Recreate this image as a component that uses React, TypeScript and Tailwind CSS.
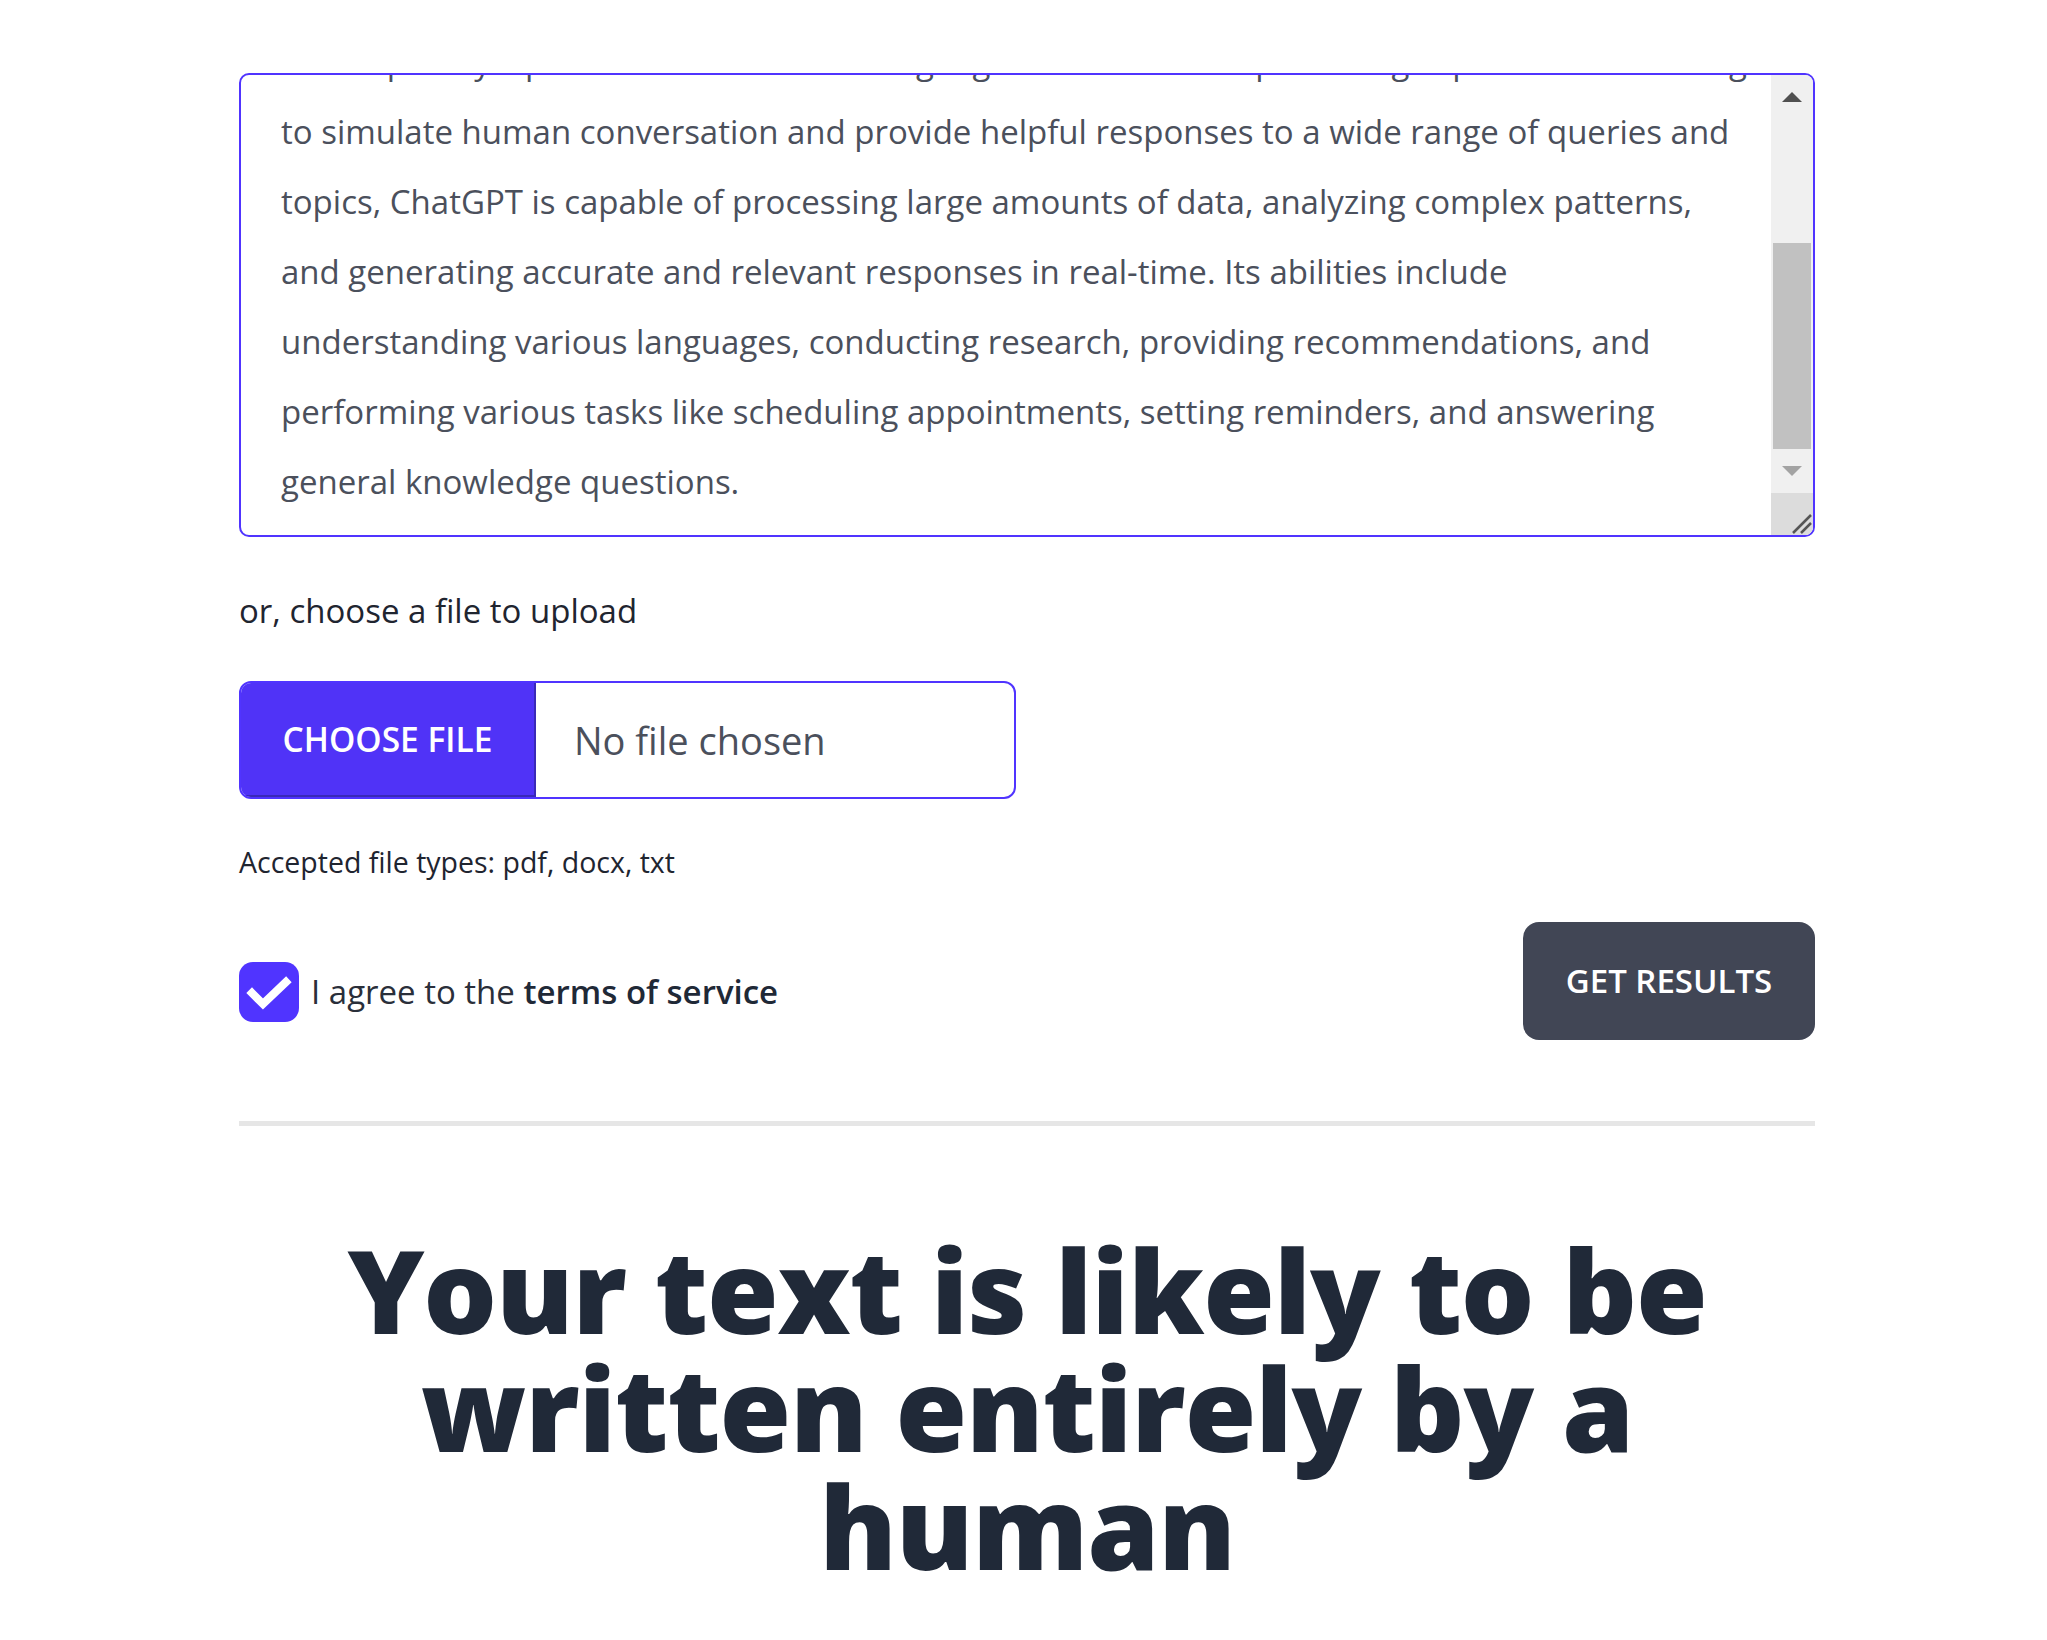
import React from "react";

const lines = [
  "Developed by OpenAI as an advanced language model with deep learning capabilities and designed",
  "to simulate human conversation and provide helpful responses to a wide range of queries and",
  "topics, ChatGPT is capable of processing large amounts of data, analyzing complex patterns,",
  "and generating accurate and relevant responses in real-time. Its abilities include",
  "understanding various languages, conducting research, providing recommendations, and",
  "performing various tasks like scheduling appointments, setting reminders, and answering",
  "general knowledge questions.",
];

function FakeTextarea() {
  return (
    <div className="flex h-[464px] overflow-hidden rounded-[10px] border-2 border-[#5034ff] bg-white">
      <div className="flex-1 overflow-hidden pl-[40px]">
        <div className="-mt-[48px] whitespace-nowrap text-[33px] leading-[70px] text-[#4b505c]">
          {lines.map((l, i) => (
            <div key={i}>{l}</div>
          ))}
        </div>
      </div>
      <div className="flex w-[42px] flex-col bg-[#f0f0f0]">
        <div className="flex h-[44px] items-center justify-center">
          <svg width="20" height="10" viewBox="0 0 20 10">
            <polygon points="10,0 20,10 0,10" fill="#505050" />
          </svg>
        </div>
        <div className="flex-1">
          <div className="mx-[2px] mt-[124px] h-[206px] bg-[#c1c1c1]" />
        </div>
        <div className="flex h-[44px] items-center justify-center">
          <svg width="20" height="10" viewBox="0 0 20 10">
            <polygon points="0,0 20,0 10,10" fill="#a3a3a3" />
          </svg>
        </div>
        <div className="flex h-[42px] items-end justify-end bg-[#dcdcdc]">
          <svg width="24" height="24" viewBox="0 0 24 24">
            <line x1="4" y1="22" x2="22" y2="4" stroke="#555" strokeWidth="2.5" />
            <line x1="12" y1="22" x2="22" y2="12" stroke="#555" strokeWidth="2.5" />
          </svg>
        </div>
      </div>
    </div>
  );
}

export default function App() {
  return (
    <div className="min-h-screen bg-white font-['Open_Sans','Noto_Sans',sans-serif]">
      <div className="ml-[239px] w-[1576px] pt-[73px] pb-[60px]">
        <FakeTextarea />

        <p className="mt-[54px] text-[33px] leading-[40px] text-[#1f2530]">
          or, choose a file to upload
        </p>

        <div className="mt-[50px] flex h-[118px] w-[777px] overflow-hidden rounded-[12px] border-2 border-[#5034ff] bg-white">
          <div className="flex w-[295px] items-center justify-center border-b-2 border-r-2 border-[#3a29b8] bg-[#5033f7] text-[33.5px] font-semibold text-white">
            CHOOSE FILE
          </div>
          <div className="flex flex-1 items-center pl-[38px] text-[38px] text-[#4b505c]">
            No file chosen
          </div>
        </div>

        <p className="mt-[47px] text-[28.5px] leading-[32px] text-[#1f2530]">
          Accepted file types: pdf, docx, txt
        </p>

        <div className="mt-[44px] flex items-start justify-between">
          <div className="mt-[40px] flex h-[60px] items-center gap-[12px]">
            <div className="flex h-[60px] w-[60px] items-center justify-center rounded-[14px] bg-[#5034ff]">
              <svg width="60" height="60" viewBox="0 0 60 60">
                <polyline
                  points="13,31 24,42 47,20"
                  fill="none"
                  stroke="#ffffff"
                  strokeWidth="8"
                  strokeLinecap="square"
                />
              </svg>
            </div>
            <span className="text-[33px] text-[#2a2f3a]">
              I agree to the <span className="font-semibold text-[#1f2937]">terms of service</span>
            </span>
          </div>
          <button className="flex h-[118px] w-[292px] items-center justify-center rounded-[16px] bg-[#414655] text-[33px] font-semibold text-white">
            GET RESULTS
          </button>
        </div>

        <div className="mt-[81px] h-[5px] bg-[#e6e6e6]" />

        <h1 className="mt-[104px] text-center text-[116px] font-extrabold leading-[118px] tracking-[-0.01em] text-[#202938]">
          Your text is likely to be
          <br />
          written entirely by a
          <br />
          human
        </h1>
      </div>
    </div>
  );
}
